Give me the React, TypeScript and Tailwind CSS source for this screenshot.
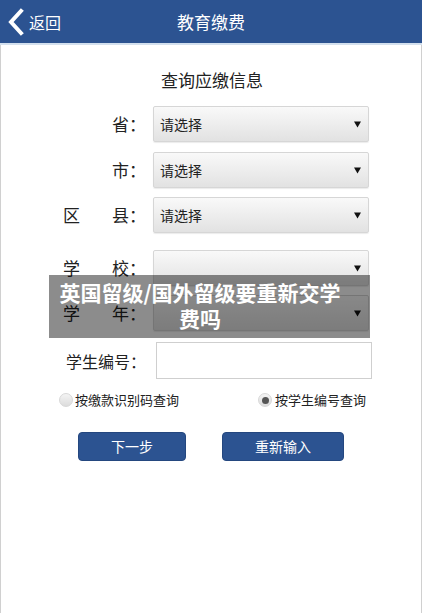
const font = { fontFamily: '"Noto Sans CJK SC", "Noto Sans", sans-serif' };

function Label({ parts, small }: { parts: string[]; small?: boolean }) {
  return (
    <div className={`w-[83px] ml-[62px] flex whitespace-nowrap text-[#222] ${small ? "text-[16px]" : "text-[17px]"} ${parts.length > 1 ? "justify-between" : "justify-end"}`}>
      {parts.map((p, i) => (
        <span key={i}>{p}</span>
      ))}
    </div>
  );
}

function SelectRow({ parts, text, className }: { parts: string[]; text?: string; className?: string }) {
  return (
    <div className={`flex items-center ${className ?? ""}`}>
      <Label parts={parts} />
      <div className="ml-[7px] w-[216px] h-9 flex items-center justify-between px-[6px] rounded-[2px] border border-[#d6d6d6] bg-gradient-to-b from-[#f9f9f9] to-[#e2e2e2] shadow-[0_1px_1px_rgba(0,0,0,0.08)]">
        <span className="text-[14px] text-[#222]">{text}</span>
        <svg width="7" height="7" viewBox="0 0 7 7" className="mr-[1px]">
          <path d="M0 0.5 H7 L3.5 6.5 Z" fill="#111" />
        </svg>
      </div>
    </div>
  );
}

export default function App() {
  return (
    <div className="w-[422px] h-[613px] bg-white relative overflow-hidden" style={font}>
      <div className="h-[43px] bg-[#2c5391] flex items-center relative">
        <svg width="18" height="28" viewBox="0 0 18 28" className="ml-[7px]">
          <path d="M14 3 L4 14 L14 25" stroke="white" strokeWidth="4" fill="none" strokeLinecap="square" />
        </svg>
        <span className="text-white text-[16px] ml-[4px]">返回</span>
        <span className="absolute left-0 right-0 text-center text-white text-[17px] pointer-events-none">教育缴费</span>
      </div>
      <div className="h-[2px] bg-[#d3e0ee]" />
      <div className="h-[568px] border-x border-[#d0d0d0] flex flex-col">
        <div className="mt-[23px] text-center text-[17px] leading-6 text-[#222] pl-[2px]">查询应缴信息</div>
        <SelectRow parts={["省："]} text="请选择" className="mt-[14px]" />
        <SelectRow parts={["市："]} text="请选择" className="mt-[10px]" />
        <SelectRow parts={["区", "县："]} text="请选择" className="mt-[9px]" />
        <SelectRow parts={["学", "校："]} className="mt-[17px]" />
        <SelectRow parts={["学", "年："]} className="mt-[9px]" />
        <div className="flex items-center mt-[11px]">
          <Label parts={["学生编号："]} small />
          <div className="ml-[10px] w-[216px] h-[37px] border border-[#cfcfcf] bg-white" />
        </div>
        <div className="flex items-center mt-[11px] h-5 text-[13px] text-[#222]">
          <span className="ml-[58px] w-[14px] h-[14px] rounded-full border border-[#d8d8d8] bg-gradient-to-b from-[#f4f4f4] to-[#dcdcdc]" />
          <span className="ml-[2px]">按缴款识别码查询</span>
          <span className="ml-[79px] w-[14px] h-[14px] rounded-full border border-[#d8d8d8] bg-gradient-to-b from-[#f4f4f4] to-[#dcdcdc] flex items-center justify-center">
            <span className="w-[7px] h-[7px] rounded-full bg-[#555]" />
          </span>
          <span className="ml-[3px]">按学生编号查询</span>
        </div>
        <div className="flex mt-[22px]">
          <button className="ml-[77px] w-[108px] h-[29px] rounded-[4px] bg-[#2c5391] border border-[#24477f] text-white text-[14px]">下一步</button>
          <button className="ml-[36px] w-[122px] h-[29px] rounded-[4px] bg-[#2c5391] border border-[#24477f] text-white text-[14px]">重新输入</button>
        </div>
      </div>
      <div className="absolute left-[49px] top-[275px] w-[321px] h-[63px] bg-black/45 pt-[4px] pr-[19px] text-center text-white font-bold text-[21px] leading-[26px]">
        英国留级/国外留级要重新交学<br />费吗
      </div>
    </div>
  );
}
